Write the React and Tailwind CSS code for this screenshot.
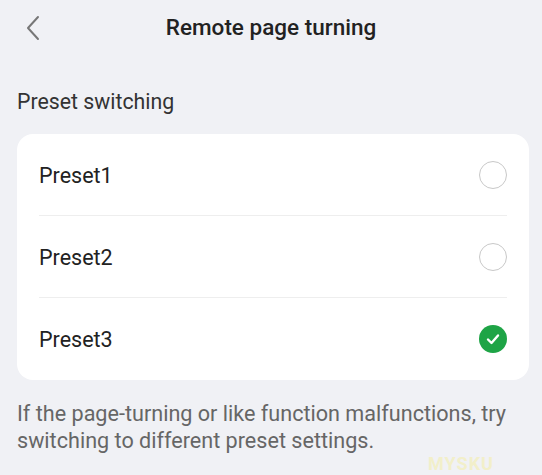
import React, { useState } from "react";

const presets = ["Preset1", "Preset2", "Preset3"];

export default function App() {
  const [selected, setSelected] = useState(2);

  return (
    <div className="relative w-[542px] h-[475px] overflow-hidden bg-[#f0f1f5] text-[#222] font-['Roboto',sans-serif]">
      {/* header */}
      <div className="relative h-[56px] flex items-center justify-center">
        <button className="absolute left-[22px] top-[14px] w-[22px] h-[28px] flex items-center justify-center">
          <svg width="16" height="26" viewBox="0 0 16 26" fill="none">
            <path d="M13 2 L3 13 L13 24" stroke="#777" strokeWidth="2" strokeLinecap="round" strokeLinejoin="round" />
          </svg>
        </button>
        <h1 className="text-[22.5px] font-medium text-[#222] mb-[1px]">Remote page turning</h1>
      </div>

      <div className="pl-[17px] pr-[13px]">
        <p className="mt-[32px] text-[21.3px] text-[#333] leading-[28px]">Preset switching</p>

        <div className="mt-[18px] bg-white rounded-[16px] px-[22px]">
          {presets.map((name, i) => (
            <div
              key={name}
              onClick={() => setSelected(i)}
              className={"h-[82px] flex items-center justify-between " + (i < presets.length - 1 ? "border-b border-[#eeeeee]" : "")}
            >
              <span className="text-[21.5px] text-[#222] pt-[3px]">{name}</span>
              {selected === i ? (
                <span className="w-[28px] h-[28px] rounded-full bg-[#1ea446] flex items-center justify-center">
                  <svg width="16" height="16" viewBox="0 0 16 16" fill="none">
                    <path d="M3 8.5 L6.5 12 L13 4.5" stroke="white" strokeWidth="2.4" strokeLinecap="round" strokeLinejoin="round" />
                  </svg>
                </span>
              ) : (
                <span className="w-[28px] h-[28px] rounded-full border border-[#c8c8c8]" />
              )}
            </div>
          ))}
        </div>

        <p className="mt-[20px] text-[21.6px] leading-[27px] text-[#666] w-[500px]">
          If the page-turning or like function malfunctions, try switching to different preset settings.
        </p>
      </div>

      <span className="absolute right-[48px] bottom-[2px] leading-none text-[18px] font-bold tracking-[1px] text-[#f3efc0] opacity-80">MYSKU</span>
    </div>
  );
}
